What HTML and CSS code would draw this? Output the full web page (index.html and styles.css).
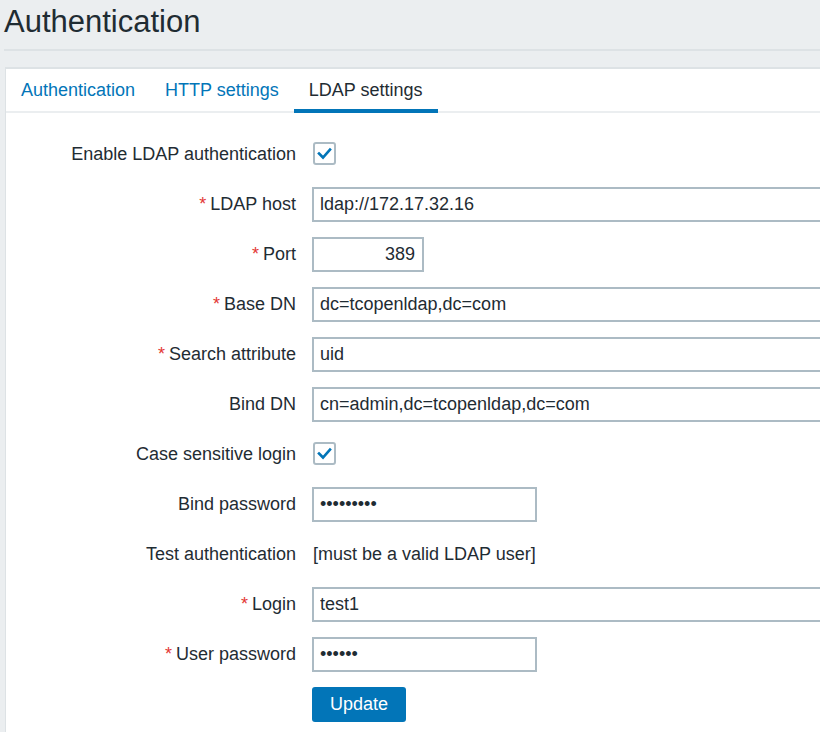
FILE: index.html
```html
<!DOCTYPE html>
<html>
<head>
<meta charset="utf-8">
<link rel="stylesheet" href="styles.css">
</head>
<body>
<header class="page-header">
  <h1 class="page-title">Authentication</h1>
</header>
<main class="panel">
  <ul class="tabs">
    <li class="tab"><a href="#">Authentication</a></li>
    <li class="tab"><a href="#">HTTP settings</a></li>
    <li class="tab active"><a href="#">LDAP settings</a></li>
  </ul>
  <form class="form">
    <label class="label">Enable LDAP authentication</label>
    <div class="field"><span class="checkbox"><svg viewBox="0 0 23 23" width="23" height="23"><path d="M6 11.5 L10 15.5 L17 7.5" fill="none" stroke="#0275b8" stroke-width="2.6" stroke-linecap="square"/></svg></span></div>

    <label class="label req">LDAP host</label>
    <div class="field"><input class="input wide" type="text" value="ldap://172.17.32.16"></div>

    <label class="label req">Port</label>
    <div class="field"><input class="input port" type="text" value="389"></div>

    <label class="label req">Base DN</label>
    <div class="field"><input class="input wide" type="text" value="dc=tcopenldap,dc=com"></div>

    <label class="label req">Search attribute</label>
    <div class="field"><input class="input wide" type="text" value="uid"></div>

    <label class="label">Bind DN</label>
    <div class="field"><input class="input wide" type="text" value="cn=admin,dc=tcopenldap,dc=com"></div>

    <label class="label">Case sensitive login</label>
    <div class="field"><span class="checkbox"><svg viewBox="0 0 23 23" width="23" height="23"><path d="M6 11.5 L10 15.5 L17 7.5" fill="none" stroke="#0275b8" stroke-width="2.6" stroke-linecap="square"/></svg></span></div>

    <label class="label">Bind password</label>
    <div class="field"><input class="input medium" type="password" value="123456789"></div>

    <label class="label">Test authentication</label>
    <div class="field"><span class="note">[must be a valid LDAP user]</span></div>

    <label class="label req">Login</label>
    <div class="field"><input class="input wide" type="text" value="test1"></div>

    <label class="label req">User password</label>
    <div class="field"><input class="input medium" type="password" value="123456"></div>

    <span></span>
    <div class="field"><button class="button" type="button">Update</button></div>
  </form>
</main>
</body>
</html>
```

FILE: styles.css
```css
html, body {
  overflow: hidden;
}
body {
  margin: 0;
  width: 820px;
  height: 732px;
  display: flex;
  flex-direction: column;
  background: #ebeef0;
  font-family: "Liberation Sans", Arial, sans-serif;
  color: #1f2c33;
}
.page-header {
  margin-left: 4px;
  padding: 2px 0 7px;
  border-bottom: 2px solid #dde2e5;
}
.page-title {
  margin: 0;
  font-size: 31px;
  font-weight: normal;
  line-height: 40px;
  color: #1f2c33;
}
.panel {
  flex: 1;
  margin-top: 16px;
  margin-left: 5px;
  background: #fff;
  border-top: 2px solid #dde2e5;
  border-left: 1px solid #dde2e5;
}
.tabs {
  display: flex;
  margin: 0;
  padding: 0;
  list-style: none;
  border-bottom: 2px solid #ebeef0;
}
.tab {
  margin-bottom: -2px;
}
.tab a {
  display: block;
  padding: 11px 15px 8px;
  font-size: 18px;
  line-height: 21px;
  color: #0275b8;
  text-decoration: none;
  border-bottom: 4px solid transparent;
}
.tab.active a {
  color: #1f2c33;
  border-bottom-color: #0275b8;
}
.form {
  display: grid;
  grid-template-columns: 290px 1fr;
  grid-auto-rows: 35px;
  column-gap: 16px;
  row-gap: 15px;
  padding-top: 24px;
  font-size: 18px;
}
.label {
  display: flex;
  align-items: center;
  justify-content: flex-end;
  line-height: 21px;
  white-space: nowrap;
}
.label.req::before {
  content: "*";
  color: #e33734;
  margin-right: 4px;
}
.field {
  display: flex;
  align-items: center;
  min-width: 0;
}
.checkbox {
  display: block;
  width: 19px;
  height: 19px;
  margin-top: -3px;
  margin-left: 1px;
  border: 2px solid #acbbc4;
  border-radius: 3px;
  position: relative;
}
.checkbox svg {
  position: absolute;
  left: -2px;
  top: -2px;
}
.input {
  box-sizing: border-box;
  height: 35px;
  margin: 0;
  padding: 0 7px 0 6px;
  border: 2px solid #acbbc4;
  border-radius: 0;
  background: #fff;
  font-family: "Liberation Sans", Arial, sans-serif;
  font-size: 18px;
  color: #1f2c33;
  outline: none;
}
.input.wide {
  width: 100%;
  border-right-width: 0;
}
.input.port { width: 112px; text-align: right; }
.input.medium { width: 225px; }
.note {
  margin-left: 1px;
  line-height: 21px;
}
.button {
  width: 94px;
  height: 35px;
  margin: 0;
  padding: 0;
  border: none;
  border-radius: 3px;
  background: #0275b8;
  color: #fff;
  font-family: "Liberation Sans", Arial, sans-serif;
  font-size: 18px;
}
```
